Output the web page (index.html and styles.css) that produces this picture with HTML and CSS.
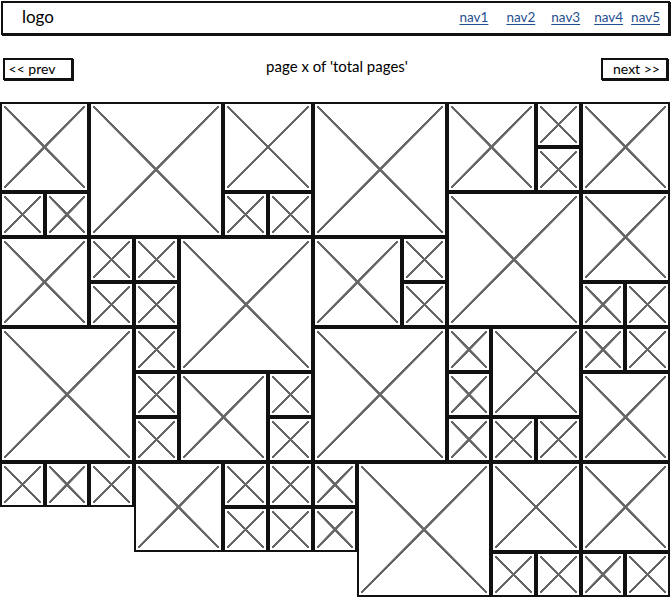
FILE: index.html
```html
<!DOCTYPE html>
<html>
<head>
<meta charset="utf-8">
<link rel="stylesheet" href="styles.css">
</head>
<body>
<header class="topbar">
  <div class="logo">logo</div>
  <nav class="nav">
    <a href="#" class="nav-link n1">nav1</a>
    <a href="#" class="nav-link n2">nav2</a>
    <a href="#" class="nav-link n3">nav3</a>
    <a href="#" class="nav-link n4">nav4</a>
    <a href="#" class="nav-link n5">nav5</a>
  </nav>
</header>
<div class="pager">
  <button class="btn prev">&lt;&lt; prev</button>
  <div class="page-info">page x of 'total pages'</div>
  <button class="btn next">next &gt;&gt;</button>
</div>
<main class="mosaic">
  <div class="t x0 y0 s2"></div>
  <div class="t x2 y0 s3"></div>
  <div class="t x5 y0 s2"></div>
  <div class="t x7 y0 s3"></div>
  <div class="t x10 y0 s2"></div>
  <div class="t x12 y0 s1"></div>
  <div class="t x13 y0 s2"></div>
  <div class="t x12 y1 s1"></div>
  <div class="t x0 y2 s1"></div>
  <div class="t x1 y2 s1"></div>
  <div class="t x5 y2 s1"></div>
  <div class="t x6 y2 s1"></div>
  <div class="t x10 y2 s3"></div>
  <div class="t x13 y2 s2"></div>
  <div class="t x0 y3 s2"></div>
  <div class="t x2 y3 s1"></div>
  <div class="t x3 y3 s1"></div>
  <div class="t x4 y3 s3"></div>
  <div class="t x7 y3 s2"></div>
  <div class="t x9 y3 s1"></div>
  <div class="t x2 y4 s1"></div>
  <div class="t x3 y4 s1"></div>
  <div class="t x9 y4 s1"></div>
  <div class="t x13 y4 s1"></div>
  <div class="t x14 y4 s1"></div>
  <div class="t x0 y5 s3"></div>
  <div class="t x3 y5 s1"></div>
  <div class="t x7 y5 s3"></div>
  <div class="t x10 y5 s1"></div>
  <div class="t x11 y5 s2"></div>
  <div class="t x13 y5 s1"></div>
  <div class="t x14 y5 s1"></div>
  <div class="t x3 y6 s1"></div>
  <div class="t x4 y6 s2"></div>
  <div class="t x6 y6 s1"></div>
  <div class="t x10 y6 s1"></div>
  <div class="t x13 y6 s2"></div>
  <div class="t x3 y7 s1"></div>
  <div class="t x6 y7 s1"></div>
  <div class="t x10 y7 s1"></div>
  <div class="t x11 y7 s1"></div>
  <div class="t x12 y7 s1"></div>
  <div class="t x0 y8 s1"></div>
  <div class="t x1 y8 s1"></div>
  <div class="t x2 y8 s1"></div>
  <div class="t x3 y8 s2"></div>
  <div class="t x5 y8 s1"></div>
  <div class="t x6 y8 s1"></div>
  <div class="t x7 y8 s1"></div>
  <div class="t x8 y8 s3"></div>
  <div class="t x11 y8 s2"></div>
  <div class="t x13 y8 s2"></div>
  <div class="t x5 y9 s1"></div>
  <div class="t x6 y9 s1"></div>
  <div class="t x7 y9 s1"></div>
  <div class="t x11 y10 s1"></div>
  <div class="t x12 y10 s1"></div>
  <div class="t x13 y10 s1"></div>
  <div class="t x14 y10 s1"></div>
</main>
</body>
</html>
```
FILE: styles.css
```css
html { overflow: hidden; }
body {
  margin: 0;
  width: 672px;
  height: 598px;
  background: #fff;
  font-family: Lato, "Noto Sans", sans-serif;
  color: #000;
}
.topbar {
  margin: 1px 2px 0 1px;
  height: 34px;
  box-sizing: border-box;
  border: 2px solid #111;
  box-shadow: 1px 1px 0 #111;
  display: flex;
  align-items: center;
  justify-content: space-between;
  padding: 0 8px 0 19px;
}
.logo {
  font-size: 17px;
  margin-top: -3px;
}
.nav {
  display: flex;
  align-items: center;
  margin-top: -3px;
}
.nav-link {
  color: #1f4f8f;
  font-size: 13.5px;
  text-decoration: underline;
  text-underline-offset: 2px;
}
.n2 { margin-left: 18px; }
.n3 { margin-left: 16px; }
.n4 { margin-left: 14px; }
.n5 { margin-left: 8px; }
.pager {
  margin-top: 22px;
  height: 23px;
  display: flex;
  align-items: center;
  justify-content: space-between;
  padding: 0 4px 0 3px;
}
.btn {
  height: 22px;
  box-sizing: border-box;
  background: #fff;
  border: 2px solid #111;
  box-shadow: 1px 1px 0 #111;
  font-family: Lato, "Noto Sans", sans-serif;
  font-size: 14px;
  color: #000;
  padding: 0;
  display: flex;
  align-items: center;
  justify-content: center;
}
.prev { width: 70px; padding-right: 12px; }
.next { width: 67px; padding-left: 4px; }
.page-info {
  font-size: 15px;
  margin-top: -6px;
  margin-left: 0;
}
.mosaic {
  margin-top: 22px;
  width: 670px;
  display: grid;
  grid-template-columns: repeat(15, 1fr);
  grid-template-rows: repeat(11, 45px);
}
.t {
  box-sizing: border-box;
  border: 2px solid #111;
  background-color: #fff;
  background-image:
    linear-gradient(to top right, transparent calc(50% - 1.4px), #666 calc(50% - 1px), #666 calc(50% + 1px), transparent calc(50% + 1.4px)),
    linear-gradient(to bottom right, transparent calc(50% - 1.4px), #666 calc(50% - 1px), #666 calc(50% + 1px), transparent calc(50% + 1.4px));
  background-origin: content-box;
  background-repeat: no-repeat;
  padding: 2px;
}
.s1 { grid-column-end: span 1; grid-row-end: span 1; }
.s2 { grid-column-end: span 2; grid-row-end: span 2; }
.s3 { grid-column-end: span 3; grid-row-end: span 3; }
.x0 { grid-column-start: 1; }
.x1 { grid-column-start: 2; }
.x2 { grid-column-start: 3; }
.x3 { grid-column-start: 4; }
.x4 { grid-column-start: 5; }
.x5 { grid-column-start: 6; }
.x6 { grid-column-start: 7; }
.x7 { grid-column-start: 8; }
.x8 { grid-column-start: 9; }
.x9 { grid-column-start: 10; }
.x10 { grid-column-start: 11; }
.x11 { grid-column-start: 12; }
.x12 { grid-column-start: 13; }
.x13 { grid-column-start: 14; }
.x14 { grid-column-start: 15; }
.y0 { grid-row-start: 1; }
.y1 { grid-row-start: 2; }
.y2 { grid-row-start: 3; }
.y3 { grid-row-start: 4; }
.y4 { grid-row-start: 5; }
.y5 { grid-row-start: 6; }
.y6 { grid-row-start: 7; }
.y7 { grid-row-start: 8; }
.y8 { grid-row-start: 9; }
.y9 { grid-row-start: 10; }
.y10 { grid-row-start: 11; }
```
